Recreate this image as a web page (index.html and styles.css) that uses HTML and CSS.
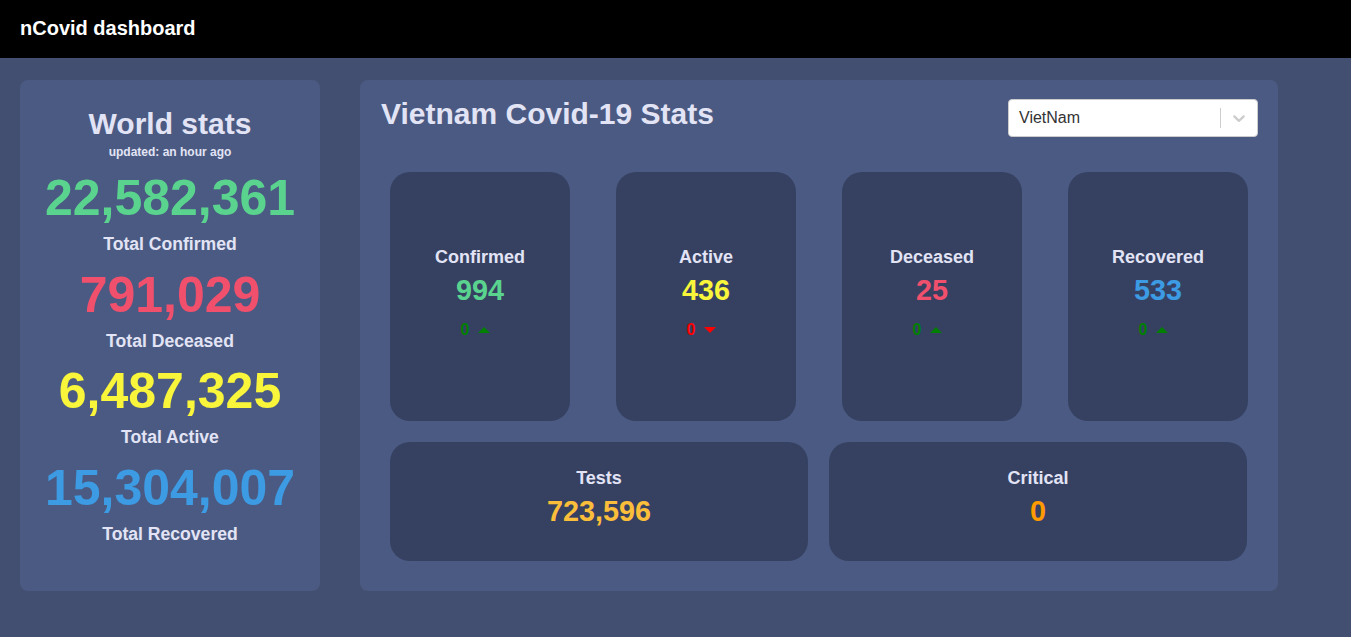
FILE: index.html
```html
<!DOCTYPE html>
<html lang="en">
<head>
<meta charset="utf-8">
<title>nCovid dashboard</title>
<link rel="stylesheet" href="styles.css">
</head>
<body>
<header class="topbar">nCovid dashboard</header>
<main class="layout">
  <section class="world">
    <h1 class="world-title">World stats</h1>
    <div class="world-updated">updated: an hour ago</div>
    <div class="world-num c-green">22,582,361</div>
    <div class="world-label">Total Confirmed</div>
    <div class="world-num c-red">791,029</div>
    <div class="world-label">Total Deceased</div>
    <div class="world-num c-yellow">6,487,325</div>
    <div class="world-label">Total Active</div>
    <div class="world-num c-blue">15,304,007</div>
    <div class="world-label">Total Recovered</div>
  </section>
  <section class="country">
    <div class="country-head">
      <h2 class="country-title">Vietnam Covid-19 Stats</h2>
      <div class="select">
        <span class="select-value">VietNam</span>
        <span class="select-sep"></span>
        <svg class="select-chev" viewBox="0 0 20 20" width="20" height="20"><path d="M4.516 7.548c0.436-0.446 1.043-0.481 1.576 0l3.908 3.747 3.908-3.747c0.533-0.481 1.141-0.446 1.574 0 0.436 0.445 0.408 1.197 0 1.615-0.406 0.418-4.695 4.502-4.695 4.502-0.217 0.223-0.502 0.335-0.787 0.335s-0.57-0.112-0.789-0.335c0 0-4.287-4.084-4.695-4.502s-0.436-1.170 0-1.615z"/></svg>
      </div>
    </div>
    <div class="cards-top">
      <div class="card">
        <div class="card-label">Confirmed</div>
        <div class="card-num c-green">994</div>
        <div class="delta up">0 <span class="tri tri-up"></span></div>
      </div>
      <div class="card">
        <div class="card-label">Active</div>
        <div class="card-num c-yellow">436</div>
        <div class="delta down">0 <span class="tri tri-down"></span></div>
      </div>
      <div class="card">
        <div class="card-label">Deceased</div>
        <div class="card-num c-red">25</div>
        <div class="delta up">0 <span class="tri tri-up"></span></div>
      </div>
      <div class="card">
        <div class="card-label">Recovered</div>
        <div class="card-num c-blue">533</div>
        <div class="delta up">0 <span class="tri tri-up"></span></div>
      </div>
    </div>
    <div class="cards-bottom">
      <div class="card card-wide">
        <div class="card-label">Tests</div>
        <div class="card-num c-orange">723,596</div>
      </div>
      <div class="card card-wide">
        <div class="card-label">Critical</div>
        <div class="card-num c-amber">0</div>
      </div>
    </div>
  </section>
</main>
</body>
</html>
```
FILE: styles.css
```css
* { box-sizing: border-box; }
html, body { margin: 0; padding: 0; }
body {
  background: #434f71;
  font-family: "Liberation Sans", Arial, sans-serif;
  min-height: 637px;
}
.topbar {
  background: #000;
  color: #fff;
  height: 58px;
  padding: 17px 20px 0;
  font-size: 20px;
  font-weight: bold;
}
.layout {
  display: flex;
  align-items: stretch;
  gap: 40px;
  padding: 22px 20px 0;
}
.world {
  width: 300px;
  background: #4b5a82;
  border-radius: 8px;
  text-align: center;
  padding-top: 27px;
  color: #e2e4f5;
}
.world-title {
  margin: 0;
  font-size: 30px;
  font-weight: bold;
}
.world-updated {
  font-size: 12px;
  font-weight: bold;
  margin-top: 4px;
  margin-bottom: 10px;
}
.world-num {
  font-size: 50px;
  font-weight: bold;
}
.world-label {
  font-size: 17.6px;
  font-weight: bold;
  margin-top: 7px;
  margin-bottom: 10.7px;
}
.country {
  width: 918px;
  background: #4b5a82;
  border-radius: 8px;
  padding: 15px 20px 30px 21px;
}
.country-head {
  display: flex;
  justify-content: space-between;
  align-items: flex-start;
}
.country-title {
  margin: 2px 0 0;
  font-size: 30px;
  font-weight: bold;
  color: #e2e4f5;
}
.select {
  margin-top: 4px;
  width: 250px;
  height: 38px;
  background: #fff;
  border: 1px solid #ccc;
  border-radius: 4px;
  display: flex;
  align-items: center;
  padding-left: 10px;
}
.select-value {
  flex: 1;
  font-size: 16px;
  color: #333;
}
.select-sep {
  width: 1px;
  height: 20px;
  background: #ccc;
}
.select-chev {
  fill: #ccc;
  margin: 0 8px;
}
.cards-top {
  margin: 35px 10px 0 9px;
  display: flex;
  justify-content: space-between;
}
.card {
  background: #364162;
  border-radius: 20px;
  text-align: center;
  color: #e2e4f5;
}
.cards-top .card {
  width: 180px;
  height: 249px;
  padding-top: 75px;
}
.cards-bottom {
  margin: 21px 11px 0 9px;
  display: flex;
  gap: 21px;
}
.card-wide {
  flex: 1;
  height: 119px;
  padding-top: 26px;
}
.card-label {
  font-size: 18px;
  font-weight: bold;
}
.card-num {
  font-size: 28.8px;
  font-weight: bold;
  margin-top: 6px;
}
.delta {
  font-size: 16px;
  font-weight: bold;
  margin-top: 14px;
  padding-right: 9px;
  display: flex;
  justify-content: center;
  align-items: center;
  gap: 9px;
}
.delta.up { color: #008000; }
.delta.down { color: #ff0000; }
.tri {
  width: 0;
  height: 0;
  border-left: 6px solid transparent;
  border-right: 6px solid transparent;
}
.tri-up { border-bottom: 6px solid #008000; }
.tri-down { border-top: 6px solid #ff0000; }
.c-green { color: #5ad38f; }
.c-red { color: #f1506d; }
.c-yellow { color: #f8f53b; }
.c-blue { color: #3c9be3; }
.c-orange { color: #fbbe3a; }
.c-amber { color: #ff9a00; }
```
